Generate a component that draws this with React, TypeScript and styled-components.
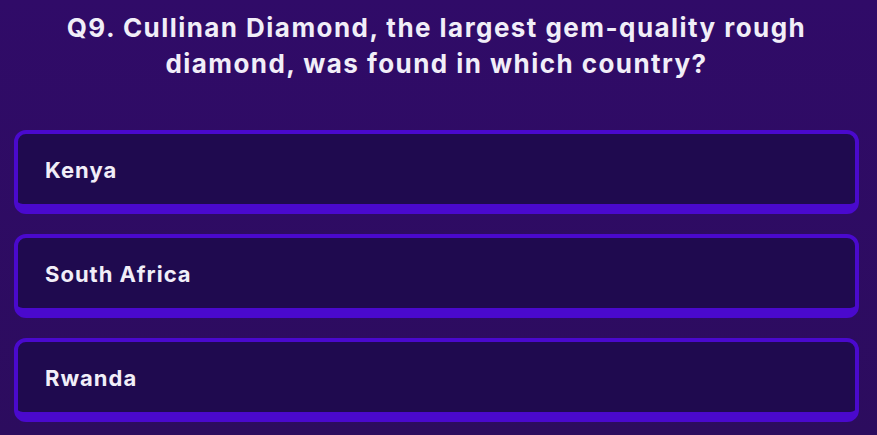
import styled, { createGlobalStyle } from 'styled-components';

const GlobalStyle = createGlobalStyle`
	html, body {
		margin: 0;
		padding: 0;
		background: #2d0b63;
	}
	body {
		font-family: Inter, 'Noto Sans', sans-serif;
	}
`;

const StyledPage = styled.div`
	width: 877px;
	height: 435px;
	box-sizing: border-box;
	background: linear-gradient(180deg, #300b68 0%, #2c0c5e 100%);
	padding: 10px 18px 0 14px;
	overflow: hidden;
`;

const StyledQuestion = styled.h1`
	margin: 0 0 48px;
	padding: 0 16px;
	text-align: center;
	color: #f1eef8;
	font-size: 26px;
	font-weight: 700;
	line-height: 36px;
	letter-spacing: 1.45px;
`;

const StyledOptions = styled.div`
	display: flex;
	flex-direction: column;
	gap: 20px;
`;

const StyledOption = styled.button`
	display: flex;
	align-items: center;
	height: 84px;
	box-sizing: border-box;
	padding: 2px 0 0 27px;
	border: 4px solid #4a09cd;
	border-bottom-width: 10px;
	border-radius: 12px;
	background: #1f0a4f;
	color: #f1eef8;
	font-family: inherit;
	font-size: 22px;
	font-weight: 700;
	letter-spacing: 1px;
	text-align: left;
	cursor: pointer;
`;

const options = ['Kenya', 'South Africa', 'Rwanda'];

export default function App() {
	return (
		<StyledPage>
			<GlobalStyle />
			<StyledQuestion>
				Q9. Cullinan Diamond, the largest gem-quality rough diamond, was found
				in which country?
			</StyledQuestion>
			<StyledOptions>
				{options.map((option) => (
					<StyledOption key={option}>{option}</StyledOption>
				))}
			</StyledOptions>
		</StyledPage>
	);
}
